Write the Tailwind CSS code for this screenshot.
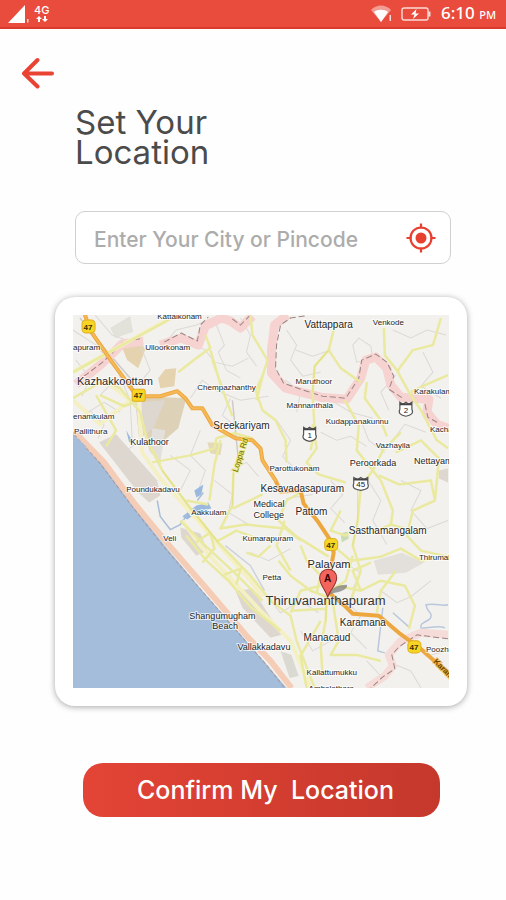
<!DOCTYPE html>
<html lang="en">
<head>
    <meta charset="UTF-8">
    <meta name="viewport" content="width=device-width, initial-scale=1.0">
    <title>Set Your Location</title>
    <script src="https://cdn.jsdelivr.net/npm/@tailwindcss/browser@4"></script>
</head>
<body class="bg-[#fefefe] min-h-screen font-['Inter','Liberation_Sans',sans-serif]">

    <!-- status bar -->
    <header class="flex items-center justify-between h-[29px] pl-2 pr-2.5 bg-[#e94b3c] border-b-2 border-[#d93a2b] text-white">
        <div class="flex items-center gap-1">
            <svg class="w-[22px] h-5" viewBox="0 0 22 20" fill="currentColor" aria-label="Signal">
                <path d="M0 19 17 1v18z"/>
                <path d="M19 15h1.500v3.500H19z" opacity=".8"/>
            </svg>
            <div class="flex flex-col items-center">
                <span class="text-[11px] leading-[11px] font-medium">4G</span>
                <svg class="w-3 h-[6px]" viewBox="0 0 12 6" fill="currentColor">
                    <path d="M3 0 0 3h2v3h2V3h2zM9 6 6 3h2V0h2v3h2z"/>
                </svg>
            </div>
        </div>
        <div class="flex items-center">
            <svg class="w-[22px] h-[18px] mr-2" viewBox="0 0 22 18" fill="currentColor" aria-label="Wi-Fi">
                <path d="M0 5C5-1 15-1 20 5L10 17z" opacity=".45"/>
                <path d="M3 7C6 4 14 4 17 7L10 17z"/>
                <path d="M18.500 10h1.500v6h-1.500z" opacity=".8"/>
            </svg>
            <svg class="w-[30px] h-[14px] mr-2.5" viewBox="0 0 30 14" fill="none" stroke="currentColor" aria-label="Battery charging">
                <rect x="1" y="1" width="26" height="12" rx="2" stroke-width="1.400" opacity=".8"/>
                <path d="M28.500 4.500v5" stroke-width="2" opacity=".8"/>
                <path d="M15.500 2 10 7.500h3.500L12 12l6-5.500h-3.500z" fill="currentColor" stroke="none"/>
            </svg>
            <span class="text-[17px] leading-5 font-medium font-['Noto_Sans',sans-serif]">6:10 <span class="text-[11px]">PM</span></span>
        </div>
    </header>

    <main class="pb-10">
        <button type="button" aria-label="Back" class="block mt-[28px] ml-[21px]">
            <svg class="w-[34px] h-[32px]" viewBox="0 0 34 32" fill="none" stroke="#e94334" stroke-width="4" stroke-linecap="round" stroke-linejoin="round">
                <path d="M16.500 3 3 16.500 16.500 29.500M3 16.500h28"/>
            </svg>
        </button>

        <h1 class="mt-[18px] ml-[75px] text-[33px] leading-[30px] text-[#4b4b4b]">Set Your<br>Location</h1>

        <!-- search field -->
        <div class="flex items-center mt-[44px] ml-[75px] mr-[55px] h-[53px] rounded-[10px] border border-[#d0d0d0] bg-white pl-[18px] pr-[14px]">
            <input type="text" aria-label="City or pincode" placeholder="Enter Your City or Pincode" class="flex-1 min-w-0 mt-1 text-[21px] leading-6 font-medium text-[#4b4b4b] placeholder:text-[#acacac] outline-none">
            <button type="button" aria-label="Use my location">
                <svg class="w-[30px] h-[30px]" viewBox="0 0 30 30" fill="none" stroke="#e8402f">
                    <circle cx="15" cy="15" r="10.500" stroke-width="2.200"/>
                    <circle cx="15" cy="15" r="5.500" fill="#e8402f" stroke="none"/>
                    <path d="M15 .5v5M15 24.500v5M.5 15h5M24.500 15h5" stroke-width="2.200"/>
                </svg>
            </button>
        </div>

        <!-- map card -->
        <section class="mt-[33px] ml-[55px] mr-[39px] rounded-[20px] bg-white p-[18px] shadow-[0_1px_6px_rgba(0,0,0,0.35)]">
            <svg class="block w-full h-auto" viewBox="73 315 375 372" role="img" aria-label="Map of Thiruvananthapuram" font-family="Liberation Sans, Arial, sans-serif">
                <rect x="73" y="315" width="375" height="372" fill="#f3f1ed"/>

                <!-- built-up areas -->
                <g fill="#ddd7cf">
                    <path d="M99 442 116 434 157 480 160 495 149 502 138 492z"/>
                    <path d="M143 396 186 398 178 428 150 452 141 425z" fill="#ddd1b8"/>
                    <path d="M141 402 165 400 153 428 143 436z"/>
                    <path d="M122 348 140 340 145 350 138 368 127 360z" fill="#e4d3ae"/>
                    <path d="M158 378 165 369 176 368 174 386 160 388z" fill="#e4d3ae"/>
                    <path d="M110 328 130 316 133 332 115 338z" fill="#e2e2da"/>
                    <path d="M180 527 200 533 207 550 196 555 181 537z"/>
                    <path d="M235 590 252 588 281 634 270 637 242 607z"/>
                    <path d="M280 650 291 654 298 675 289 677z" fill="#dad9d2"/>
                    <path d="M373 560 401 552 423 562 405 572 377 574z" fill="#e3e0dc"/>
                    <path d="M438 470 447 468 447 482 438 478z"/>
                    <path d="M152 428 165 430 160 462 150 452z" fill="#e3dfdb"/>
                    <path d="M207 442 222 443 220 455 210 453z" fill="#e4d9b8"/>
                    <path d="M340 533 347 531 348 538 341 542z" fill="#c9dcb5"/>
                </g>

                <!-- minor streets -->
                <g fill="none" stroke="#dcd9d7" stroke-width="1">
                    <path d="M73 330 96 345 118 372 130 400 132 440M95 315 112 335 140 345 150 370 138 385M160 348 176 330 196 325 212 318M182 340 205 350 214 362 232 366 248 358"/>
                    <path d="M216 325 224 345 218 352 226 370 240 378M240 318 250 335 246 352 256 366M190 398 202 380 215 390 240 400 268 396M200 430 190 455 205 470 198 490"/>
                    <path d="M286 330 296 345 290 360 302 376 320 372M295 350 312 356 330 350M358 338 370 346 372 358 356 362 352 345zM392 330 410 338 426 330 445 335M422 352 432 372 420 386 440 398"/>
                    <path d="M276 420 290 440 282 456 296 470M320 432 336 440 350 436 366 446M330 480 342 494 330 508 344 522M366 478 380 500 372 520 386 544M400 480 420 490 410 510 426 528 447 520"/>
                    <path d="M214 480 232 494 228 512 248 524M230 470 246 462 258 476M170 455 190 470 180 490M250 552 268 560 290 548M262 590 280 612 300 600 318 612M300 630 312 650 330 640"/>
                    <path d="M345 600 360 615 350 632 366 648M380 590 396 602 410 596 430 580M410 640 425 655 447 650M366 660 380 675 372 687M390 662 410 670 420 687M340 560 360 572 352 588"/>
                    <path d="M73 400 88 412 104 402 120 412M76 360 90 378 82 396M90 410 104 425 98 438M120 455 140 440M100 395 115 380"/>
                    <path d="M285 380 300 392 296 412M330 400 350 412 372 418M392 440 404 424 425 432M230 398 222 415 240 430M286 498 312 494M360 420 368 440 384 452M395 375 380 392 388 410"/>
                </g>
                <path d="M80 318 104 348 130 378 136 402 141 450M232 400 238 460" fill="none" stroke="#cfcac8" stroke-width="1.500"/>

                <!-- district boundary -->
                <g fill="none" stroke-linejoin="round">
                    <path d="M76 384 100 365 122 344 143 341M160 345 181 338 198 345 205 326 221 318 230 321 240 328 252 316" stroke="#f6d3d0" stroke-width="9"/>
                    <path d="M287 315 274 325 271 350 271 373 285 388 320 397 346 399 360 378 365 360 375 357 386 368 390 385 400 397 428 399 426 412 436 424 447 428" stroke="#f6d3d0" stroke-width="9"/>
                    <path d="M447 634 420 632 400 640 388 654 392 665 384 675 366 687" stroke="#f6dcd8" stroke-width="8"/>
                    <path d="M84 376 104 361 123 342 143 338M164 342 181 333 197 341 200 325 208 317M232 319 240 325 250 315" stroke="#9b8484" stroke-width="1" stroke-dasharray="6 3"/>
                    <path d="M304 316 290 318 280 325 276 345 275 368 283 383 300 389 322 396 345 398 358 378 361 360 375 354 386 362 393 376 388 389 402 398M424 404 427 417 436 422" stroke="#9b8484" stroke-width="1" stroke-dasharray="6 3"/>
                    <path d="M447 638 416 634 398 646 391 654 394 668 382 676 370 687" stroke="#9b8484" stroke-width="1" stroke-dasharray="6 3"/>
                </g>

                <!-- sea and coast -->
                <path d="M73 431 98 458 132 504 166 547 202 590 244 638 264 661 286 687H73z" fill="#a3bddb"/>
                <path d="M75 432 104 462 135 504 169 545 208 590 247 636 270 660 291 687" fill="none" stroke="#f5cdb6" stroke-width="6"/>
                <path d="M74 434 100 463 132 506 165 548 204 593 244 639 266 664 284 687" fill="none" stroke="#a79a9f" stroke-width="1" stroke-dasharray="4 2"/>
                <path d="M73 434v10l14 3z" fill="#a3bddb"/>

                <!-- lake and canals -->
                <path d="M194 490 203 484 201 494 196 497zM182 516 196 505 208 502 211 508 198 511 187 519zM126 430 133 442 129 442z" fill="#9bb9df"/>
                <g fill="none" stroke="#a9bdd9" stroke-width="1.500">
                    <path d="M157 500 160 516 170 529 180 524 187 514M197 500 203 492"/>
                    <path d="M447 604C440 606 436 602 425 604 426 612 433 612 429 618 424 622 419 622 420 627 428 628 436 624 444 627M382 607 377 650 384 652M392 612 408 626" stroke="#b9c8dd"/>
                    <path d="M225 545 250 565 264 590" stroke="#ccd3dc"/>
                </g>

                <!-- secondary roads -->
                <g fill="none" stroke="#f4f0c4" stroke-width="4" stroke-linejoin="round">
                    <path d="M73 372 120 346 170 318"/>
                    <path d="M138 400 142 452 160 478 184 505 215 540 250 580 262 596"/>
                    <path d="M73 400 100 424 130 400 104 380"/>
                    <path d="M182 520 200 545 225 572 260 610 290 640 310 687"/>
                </g>
                <g fill="none" stroke="#eae9a0" stroke-width="2.500" stroke-linejoin="round">
                    <path d="M73 372 120 346 172 318M178 372 196 358 210 348 205 335M210 350 220 384 232 416M212 360 222 388"/>
                    <path d="M100 395 124 406 140 400M96 395 116 430 106 446M73 398 104 380 120 388 140 412 147 440 160 464"/>
                    <path d="M250 315 252 335 267 360 262 376 255 390 262 410 275 420 285 440 286 462M262 376 256 400"/>
                    <path d="M335 322 328 350 314 366 312 392 314 430 310 450M328 350 340 368 360 382M383 328 384 355 396 370 408 392 420 410 436 440 447 448"/>
                    <path d="M440 318 432 345 412 350 400 366 396 372M447 375 424 385 410 392M366 382 364 398 380 420 386 436"/>
                    <path d="M344 400 358 425 356 450 372 470 380 480 392 510 390 524M400 432 382 450 372 470 360 486 357 520 352 545 360 570 350 600"/>
                    <path d="M378 475 398 484 430 480 434 500 412 510 406 535 420 550 447 556M434 500 438 458 420 440 395 452"/>
                    <path d="M312 424 316 448 306 462 318 474 345 482M300 492 286 500 278 520 296 536 312 546 328 556"/>
                    <path d="M233 472 232 505 220 528 245 524 285 528 300 540M152 462 190 455 214 448 216 438 234 433 252 438"/>
                    <path d="M232 508 262 494M220 440 214 465 209 500M186 500 208 504"/>
                    <path d="M147 440 162 470 188 505 218 542 250 575 270 600 290 615 296 640 314 687M218 540 236 530 262 540M180 520 206 546 236 574 262 600"/>
                    <path d="M186 535 206 560 228 580 250 606 280 630M195 542 210 532 214 548 202 562M224 574 240 568 236 584"/>
                    <path d="M278 560 290 575 310 590 326 596 325 620 320 645 322 675M290 610 326 608M290 612 300 590 320 585"/>
                    <path d="M284 520 276 545 290 570M300 545 306 560 320 575 316 592M336 548 350 560 380 556 400 548 420 560 447 556M352 555 345 580 330 590"/>
                    <path d="M336 585 360 590 380 580 404 585 414 605 408 628M332 600 338 640 330 654 356 654 380 660M320 620 300 655 306 687M360 590 352 570 370 562"/>
                    <path d="M376 530 390 524 410 530M340 510 330 530 345 535 357 525M395 570 380 590 376 612M270 545 258 556 246 552"/>
                </g>
                <g fill="none" stroke="#e3e083" stroke-width="1">
                    <path d="M328 350 314 366 312 392M357 480 357 520 352 545M233 472 232 505M162 470 188 505 218 542M326 596 325 620"/>
                </g>

                <!-- highway 47 -->
                <g fill="none" stroke-linejoin="round" stroke-linecap="round">
                    <path d="M85 315 90 330 112 362 134 392 145 396 160 396 177 391 185 398 192 408 202 408 212 425 235 438 252 440 260 448 262 460 275 480 280 491 300 490 303 503 318 522 328 537 333 552 326 590 345 606 352 613 378 615 398 632 420 648 447 672" stroke="#eda73f" stroke-width="4"/>
                    <path d="M85 315 90 330 112 362 134 392 145 396 160 396 177 391 185 398 192 408 202 408 212 425 235 438 252 440 260 448 262 460 275 480" stroke="#f6b957" stroke-width="2"/>
                </g>

                <!-- road shields -->
                <g font-size="8" font-weight="bold" text-anchor="middle" fill="#3a3200">
                    <g fill="#f8d423" stroke="#dcae23" stroke-width="1">
                        <rect x="82" y="320" width="13" height="13" rx="4"/>
                        <rect x="132" y="389" width="13" height="12" rx="2"/>
                        <rect x="324" y="538" width="13" height="12" rx="4"/>
                        <rect x="407" y="640" width="13" height="12" rx="4"/>
                    </g>
                    <text x="88" y="330">47</text>
                    <text x="138" y="398">47</text>
                    <text x="330" y="547">47</text>
                    <text x="413" y="649">47</text>
                </g>
                <g font-size="8" text-anchor="middle" fill="#222">
                    <g fill="#fff" stroke="#555" stroke-width="1.200">
                        <path d="M303 427 306 429 309 427 312 429 315 427V434C317 438 314 440 309 441 304 440 301 438 303 434z"/>
                        <path d="M399 402 402 404 405 402 408 404 411 402V409C413 413 410 415 405 416 400 415 397 413 399 409z"/>
                        <path d="M353 477 357 479 360 477 363 479 367 477V483C369 488 365 489 360 490 355 489 351 488 353 483z"/>
                    </g>
                    <path d="M303 429h12M399 404h12M353 479h14" stroke="#444" stroke-width="2"/>
                    <text x="309" y="438">1</text>
                    <text x="405" y="413">2</text>
                    <text x="360" y="487">45</text>
                </g>

                <!-- place names -->
                <g fill="#262626" stroke="#fff" stroke-opacity=".7" stroke-width="2" paint-order="stroke" font-size="8">
                    <text x="157" y="319">Kattaikonam</text>
                    <text x="73" y="350">apuram</text>
                    <text x="145" y="350">Ulloorkonam</text>
                    <text x="77" y="385" font-size="11">Kazhakkoottam</text>
                    <text x="197" y="390">Chempazhanthy</text>
                    <text x="73" y="419">enamkulam</text>
                    <text x="74" y="434">Pallithura</text>
                    <text x="130" y="445" font-size="9">Kulathoor</text>
                    <text x="213" y="429" font-size="10">Sreekariyam</text>
                    <text x="304" y="328" font-size="10">Vattappara</text>
                    <text x="372" y="325">Venkode</text>
                    <text x="295" y="384">Maruthoor</text>
                    <text x="286" y="408">Mannanthala</text>
                    <text x="325" y="424">Kudappanakunnu</text>
                    <text x="413" y="394">Karakulam</text>
                    <text x="429" y="432">Kachani</text>
                    <text x="375" y="448">Vazhayila</text>
                    <text x="349" y="466" font-size="9">Peroorkada</text>
                    <text x="413" y="464" font-size="9">Nettayam</text>
                    <text x="269" y="471">Parottukonam</text>
                    <text x="260" y="492" font-size="10">Kesavadasapuram</text>
                    <text x="253" y="507" font-size="9">Medical</text>
                    <text x="253" y="517" font-size="9">College</text>
                    <text x="295" y="514" font-size="10">Pattom</text>
                    <text x="126" y="492">Poundukadavu</text>
                    <text x="191" y="514">Aakkulam</text>
                    <text x="163" y="540">Veli</text>
                    <text x="242" y="540">Kumarapuram</text>
                    <text x="348" y="533" font-size="10">Sasthamangalam</text>
                    <text x="418" y="559">Thirumala</text>
                    <text x="307" y="567" font-size="11">Palayam</text>
                    <text x="262" y="579">Petta</text>
                    <text x="339" y="625" font-size="10">Karamana</text>
                    <text x="303" y="640" font-size="10">Manacaud</text>
                    <text x="189" y="618" font-size="9">Shangumugham</text>
                    <text x="212" y="628" font-size="9">Beach</text>
                    <text x="237" y="649" font-size="9">Vallakkadavu</text>
                    <text x="425" y="651">Poozhi</text>
                    <text x="306" y="674">Kallattumukku</text>
                    <text x="308" y="690">Ambalathara</text>
                    <text transform="translate(237 472) rotate(-72)" fill="#6d6a10" stroke="#eeea5a">Loppa Rd</text>
                    <text transform="translate(432 661) rotate(45)" font-weight="bold" fill="#6b4a00" stroke="#f0b040">Karam</text>
                </g>

                <!-- pin -->
                <path d="M328 594C330 588 336 584 346 584 348 587 342 591 334 592z" fill="#777" opacity=".7"/>
                <path d="M327 597C326 590 319 585 319 577A8.500 8.500 0 0 1 336 577C336 585 328 590 327 597z" fill="#f2645c" stroke="#8f2f2b"/>
                <text x="327" y="581" text-anchor="middle" font-size="10" font-weight="bold" fill="#300">A</text>
                <text x="265" y="604" font-size="13" fill="#333" stroke="#fff" stroke-opacity=".5" stroke-width="1" paint-order="stroke">Thiruvananthapuram</text>
            </svg>
        </section>

        <div class="mt-[57px] ml-[83px] mr-[66px]">
            <button type="button" class="w-full h-[54px] rounded-[20px] bg-linear-to-r from-[#e34435] to-[#c5382c] pl-2 text-[25px] leading-8 font-medium text-white whitespace-pre">Confirm My  Location</button>
        </div>
    </main>
</body>
</html>
